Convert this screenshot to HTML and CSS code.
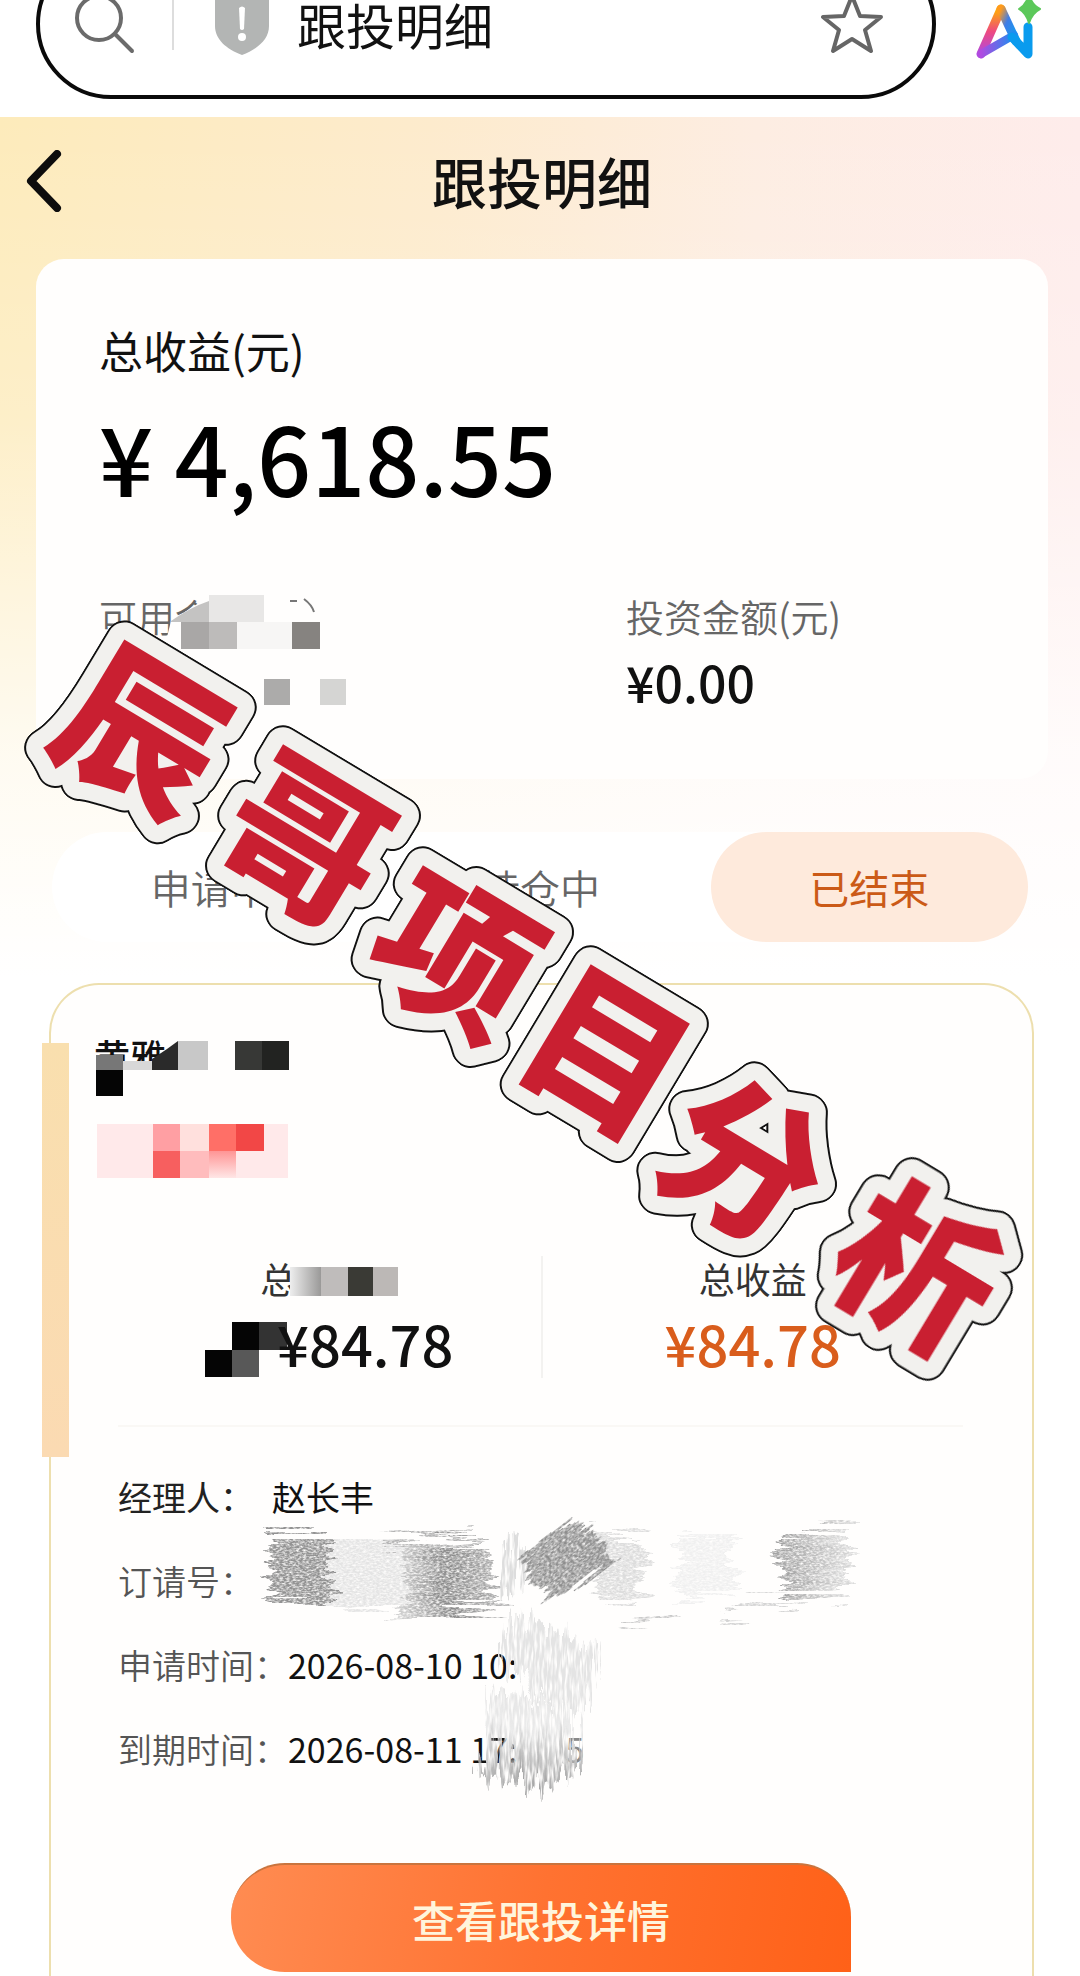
FILE: index.html
```html
<!DOCTYPE html>
<html lang="zh-CN">
<head>
    <meta charset="UTF-8">
    <meta name="viewport" content="width=device-width, initial-scale=1.0">
    <title>跟投明细</title>
    <link rel="stylesheet" href="styles.css">
</head>
<body>
    <div class="browser-bar">
        <div class="search-box">
            <svg class="icon-search" width="64" height="64" viewBox="0 0 64 64" fill="none" stroke="#6b6b6b" stroke-width="4" stroke-linecap="round">
                <circle cx="27" cy="26" r="22"/>
                <path d="M43 42 L60 59"/>
            </svg>
            <span class="bar-line"></span>
            <svg class="icon-shield" width="56" height="64" viewBox="0 0 56 64">
                <path d="M28 0 C36 6 46 7 55 8 V34 C55 47 44 57 28 63 C12 57 1 47 1 34 V8 C10 7 20 6 28 0 Z" fill="#b3b5b4"/>
                <path d="M25 16 Q28 13 31 16 L30 37 Q28 39 26 37 Z" fill="#fff"/>
                <circle cx="28" cy="45" r="4" fill="#fff"/>
            </svg>
            <span class="search-text">跟投明细</span>
            <svg class="icon-star" width="64" height="64" viewBox="0 0 64 64" fill="none" stroke="#666" stroke-width="4" stroke-linejoin="round">
                <path d="M32 4 L40 24 L61 25 L45 38 L51 59 L32 47 L13 59 L19 38 L3 25 L24 24 Z"/>
            </svg>
        </div>
        <svg class="icon-ai" width="72" height="72" viewBox="0 0 72 72" fill="none" stroke-linecap="round" stroke-linejoin="round">
            <defs>
                <linearGradient id="aiLeft" x1="0" y1="1" x2="0" y2="0">
                    <stop offset="0" stop-color="#b04ae0"/>
                    <stop offset=".5" stop-color="#ee4a80"/>
                    <stop offset="1" stop-color="#ffb000"/>
                </linearGradient>
                <linearGradient id="aiRight" x1="0" y1="0" x2="1" y2="1">
                    <stop offset="0" stop-color="#ff9a1c"/>
                    <stop offset=".4" stop-color="#3f7de8"/>
                    <stop offset="1" stop-color="#0aa0f0"/>
                </linearGradient>
                <linearGradient id="aiCross" x1="0" y1="0" x2="1" y2="0">
                    <stop offset="0" stop-color="#b04ae0"/>
                    <stop offset="1" stop-color="#1d8df0"/>
                </linearGradient>
            </defs>
            <path d="M9 61 L29 16" stroke="url(#aiLeft)" stroke-width="9"/>
            <path d="M29 16 L44 48" stroke="url(#aiRight)" stroke-width="9"/>
            <path d="M9 61 L42 42" stroke="url(#aiCross)" stroke-width="8"/>
            <path d="M40 44 L56 61 V34" stroke="#0a9bee" stroke-width="9"/>
            <path d="M57 2 Q60 12 68 16 Q60 20 57 30 Q54 20 47 16 Q54 12 57 2 Z" fill="#5cc85a" stroke="#5cc85a" stroke-width="2"/>
        </svg>
    </div>

    <main class="page">
        <header class="page-header">
            <button class="back" aria-label="返回">
                <svg width="36" height="62" viewBox="0 0 36 62" fill="none" stroke="#0d0d0d" stroke-width="8" stroke-linecap="round" stroke-linejoin="round">
                    <path d="M31 4 L5 31 L31 58"/>
                </svg>
            </button>
            <h1>跟投明细</h1>
        </header>

        <section class="summary">
            <p class="summary-title">总收益(元)</p>
            <p class="balance">¥ 4,618.55</p>
            <div class="summary-row">
                <div class="summary-item">
                    <p class="item-label">可用金额(元)</p>
                    <svg class="mosaic mosaic-balance" width="260" height="112" viewBox="0 0 260 112">
                        <path d="M72 28 L112 2 L260 0 V112 H0 V60 H64 Z" fill="#fffefd"/>
                        <path d="M72 28 Q92 14 110 8 V29 H72 Z" fill="#c4c3c2"/>
                        <rect x="110" y="2" width="55" height="28" fill="#e8e7e6"/>
                        <rect x="82" y="29" width="28" height="27" fill="#a9a7a6"/>
                        <rect x="110" y="29" width="28" height="27" fill="#bdbbba"/>
                        <rect x="138" y="29" width="55" height="27" fill="#f7f6f5"/>
                        <rect x="193" y="29" width="28" height="27" fill="#868380"/>
                        <rect x="165" y="86" width="26" height="26" fill="#acabaa"/>
                        <rect x="221" y="86" width="26" height="26" fill="#d5d5d3"/>
                        <path d="M191 8 H198 M205 6 Q213 12 215 19" fill="none" stroke="#777" stroke-width="2"/>
                    </svg>
                </div>
                <div class="summary-item">
                    <p class="item-label">投资金额(元)</p>
                    <p class="item-value">¥0.00</p>
                </div>
            </div>
        </section>

        <nav class="tabs">
            <button class="tab">申请中</button>
            <button class="tab">持仓中</button>
            <button class="tab active">已结束</button>
        </nav>

        <section class="order">
            <h2 class="order-name">黄雅
                <svg class="mosaic mosaic-name" width="200" height="60" viewBox="0 0 200 60">
                    <rect x="0" y="16" width="32" height="30" fill="#fffefd"/>
                    <rect x="32" y="20" width="50" height="26" fill="#fffefd"/>
                    <rect x="5" y="14" width="27" height="15" fill="#777"/>
                    <rect x="32" y="20" width="29" height="9" fill="#d8d8d8"/>
                    <path d="M61 18 L76 8 L87 0 V29 H61 Z" fill="#2a2a2a"/>
                    <rect x="5" y="29" width="27" height="26" fill="#050505"/>
                    <rect x="87" y="0" width="30" height="29" fill="#c8c8c8"/>
                    <rect x="144" y="0" width="27" height="29" fill="#373836"/>
                    <rect x="171" y="0" width="27" height="29" fill="#222321"/>
                </svg>
            </h2>
            <svg class="order-tag" width="191" height="54" viewBox="0 0 191 54">
                <defs>
                    <linearGradient id="tagFade" x1="0" y1="0" x2="0" y2="1">
                        <stop offset="0" stop-color="#ff9595"/>
                        <stop offset="1" stop-color="#ffe6e6"/>
                    </linearGradient>
                </defs>
                <rect width="191" height="54" fill="#ffe9ea"/>
                <rect x="56" width="27" height="27" fill="#ff9fa3"/>
                <rect x="83" width="29" height="27" fill="#ffe0dd"/>
                <rect x="112" width="27" height="27" fill="#ff6f67"/>
                <rect x="139" width="28" height="27" fill="#f24746"/>
                <rect x="56" y="27" width="27" height="27" fill="#f75f5f"/>
                <rect x="83" y="27" width="29" height="27" fill="#ffbcbd"/>
                <rect x="112" y="27" width="27" height="27" fill="url(#tagFade)"/>
            </svg>

            <div class="stats">
                <div class="stat">
                    <p class="stat-label">总<svg class="stat-mosaic" width="108" height="29" viewBox="0 0 108 29">
                            <defs>
                                <linearGradient id="labelFade">
                                    <stop offset="0" stop-color="#eee"/>
                                    <stop offset="1" stop-color="#9a9998"/>
                                </linearGradient>
                            </defs>
                            <rect width="31" height="29" fill="url(#labelFade)"/>
                            <rect x="31" width="27" height="29" fill="#bfbcbb"/>
                            <rect x="58" width="25" height="29" fill="#3a3a35"/>
                            <rect x="83" width="25" height="29" fill="#bcb8b6"/>
                        </svg>
                    </p>
                    <p class="stat-value"><svg class="value-mosaic" width="82" height="55" viewBox="0 0 82 55">
                            <rect x="27" width="27" height="28" fill="#050505"/>
                            <rect x="54" width="28" height="28" fill="#333"/>
                            <rect y="28" width="27" height="27" fill="#050505"/>
                            <rect x="27" y="28" width="27" height="27" fill="#585858"/>
                        </svg>¥84.78</p>
                </div>
                <div class="stat">
                    <p class="stat-label">总收益</p>
                    <p class="stat-value profit">¥84.78</p>
                </div>
            </div>

            <dl class="details">
                <div class="detail manager"><dt>经理人：</dt><dd>赵长丰</dd></div>
                <div class="detail"><dt>订请号：</dt><dd></dd></div>
                <div class="detail"><dt>申请时间：</dt><dd>2026-08-10 10:</dd></div>
                <div class="detail"><dt>到期时间：</dt><dd>2026-08-11 17:<span class="rest">5</span></dd></div>
                <svg class="scribble" width="600" height="290" viewBox="260 1515 600 290">
                    <defs>
                        <filter id="pencilH" x="-10%" y="-10%" width="120%" height="120%">
                            <feTurbulence type="fractalNoise" baseFrequency="0.01 0.2" numOctaves="2" seed="4" result="streak"/>
                            <feDisplacementMap in="SourceGraphic" in2="streak" scale="44" xChannelSelector="R" yChannelSelector="A" result="shape"/>
                            <feTurbulence type="fractalNoise" baseFrequency="0.3 0.6" numOctaves="2" seed="9"/>
                            <feColorMatrix values="0 0 0 0 0  0 0 0 0 0  0 0 0 0 0  2 0 0 0 -0.3" result="grain"/>
                            <feComposite in="shape" in2="grain" operator="in"/>
                        </filter>
                        <filter id="pencilV" x="-10%" y="-10%" width="120%" height="120%">
                            <feTurbulence type="fractalNoise" baseFrequency="0.2 0.01" numOctaves="2" seed="7" result="streak"/>
                            <feDisplacementMap in="SourceGraphic" in2="streak" scale="50" xChannelSelector="A" yChannelSelector="R" result="shape"/>
                            <feTurbulence type="fractalNoise" baseFrequency="0.4 0.06" numOctaves="2" seed="2"/>
                            <feColorMatrix values="0 0 0 0 0  0 0 0 0 0  0 0 0 0 0  3 0 0 0 -0.8" result="grain"/>
                            <feComposite in="shape" in2="grain" operator="in"/>
                        </filter>
                        <linearGradient id="strokeDown" x1="0" y1="0" x2="0" y2="1">
                            <stop offset="0" stop-color="#e4e4e4"/>
                            <stop offset=".4" stop-color="#ebebeb"/>
                            <stop offset="1" stop-color="#a4a4a4"/>
                        </linearGradient>
                        <linearGradient id="strokeSide">
                            <stop offset="0" stop-color="#a0a0a0"/>
                            <stop offset="1" stop-color="#ddd"/>
                        </linearGradient>
                        <linearGradient id="strokeMid">
                            <stop offset="0" stop-color="#d8d8d8"/>
                            <stop offset=".4" stop-color="#8a8a8a"/>
                            <stop offset="1" stop-color="#c0c0c0"/>
                        </linearGradient>
                    </defs>
                    <g filter="url(#pencilH)">
                        <path d="M268 1536 H332 V1601 L270 1604 Z" fill="#929292"/>
                        <path d="M332 1543 L410 1538 V1607 L350 1612 L332 1599 Z" fill="#e4e4e4"/>
                        <path d="M384 1541 L476 1532 V1538 L386 1548 Z" fill="#b4b4b4"/>
                        <path d="M402 1544 L490 1542 L492 1601 L516 1605 L394 1620 L408 1595 Z" fill="url(#strokeMid)"/>
                        <path d="M586 1533 H640 L645 1598 L600 1602 Z" fill="#dcdcdc"/>
                        <path d="M680 1534 H730 V1597 H680 Z" fill="#f0f0f0"/>
                        <path d="M778 1534 L848 1530 V1596 L782 1601 Z" fill="url(#strokeSide)"/>
                        <path d="M610 1620 L680 1611 L676 1616 L625 1623 Z" fill="#c8c8c8"/>
                        <path d="M725 1618 L745 1605 L796 1607 V1611 Z" fill="#d4d4d4"/>
                    </g>
                    <path d="M503 1537 L530 1540 L518 1595 L498 1594 Z" fill="#ddd" filter="url(#pencilV)"/>
                    <g filter="url(#pencilV)">
                        <path d="M514 1615 L545 1627 L602 1647 L587 1715 L530 1695 L508 1650 Z" fill="#e4e4e4"/>
                        <path d="M494 1685 L535 1700 L574 1707 L578 1773 L540 1790 L474 1775 Z" fill="url(#strokeDown)"/>
                    </g>
                    <g transform="rotate(-38 565 1568)" filter="url(#pencilH)">
                        <path d="M530 1536 H604 L610 1592 H540 Z" fill="#8c8c8c"/>
                    </g>
                </svg>
            </dl>

            <button class="view-btn">查看跟投详情</button>
        </section>
    </main>

    <svg class="stamp" width="1080" height="820" viewBox="0 590 1080 820">
        <g class="stamp-text">
            <text transform="translate(142 732) rotate(31)" y="60">辰</text>
            <text transform="translate(306 840) rotate(31)" y="60">哥</text>
            <text transform="translate(456 954) rotate(31)" y="60">项</text>
            <text transform="translate(606 1052) rotate(31)" y="60">目</text>
            <text transform="translate(744 1160) rotate(31)" y="60">分</text>
            <text transform="translate(918 1268) rotate(31)" y="60">析</text>
        </g>
    </svg>
</body>
</html>
```

FILE: styles.css
```css
* {
    box-sizing: border-box;
}
body {
    position: relative;
    margin: 0;
    background: #fff;
    color: #111;
    font-family: "Noto Sans CJK SC", sans-serif;
    overflow-x: hidden;
}
h1, h2, p, dl, dd {
    margin: 0;
}
button {
    border: none;
    padding: 0;
    background: none;
    font-family: inherit;
    cursor: pointer;
}
svg {
    flex: none;
}

/* browser bar */
.browser-bar {
    height: 117px;
    padding: 0 36px 18px;
    display: flex;
    align-items: flex-end;
    gap: 36px;
    overflow: hidden;
}
.search-box {
    flex: 1;
    height: 150px;
    flex-shrink: 0;
    padding: 0 48px 0 32px;
    border: 4px solid #0a0a0a;
    border-radius: 75px;
    display: flex;
    align-items: center;
}
.bar-line {
    width: 2px;
    height: 52px;
    margin: 0 40px 0 36px;
    background: #ddd;
}
.search-text {
    flex: 1;
    margin-left: 27px;
    font-size: 49px;
    line-height: 48px;
}
.icon-ai {
    margin-bottom: 34px;
}

/* page */
.page {
    padding: 0 32px 0 36px;
    background:
        linear-gradient(to bottom, rgba(255, 255, 255, 0) 0, rgba(255, 255, 255, 0.2) 300px, rgba(255, 255, 255, 0.8) 640px, #fff 860px),
        linear-gradient(to right, #fdebbb 0, #fdebcd 40%, #fdede2 70%, #feeceb 100%);
}
.page-header {
    position: relative;
    height: 142px;
    padding-top: 25px;
    text-align: center;
}
.page-header h1 {
    font-size: 55px;
    font-weight: 500;
    line-height: 76px;
}
.back {
    position: absolute;
    left: -10px;
    top: 33px;
    height: 62px;
}

.summary {
    padding: 61px 63px 68px;
    border-radius: 28px;
    background: #fffefd;
}
.summary-title {
    font-size: 44px;
    line-height: 60px;
}
.balance {
    margin-top: 16px;
    font-size: 95px;
    font-weight: 500;
    line-height: 120px;
    color: #000;
}
.summary-row {
    display: grid;
    grid-template-columns: 527px 1fr;
    margin-top: 76px;
}
.summary-item {
    position: relative;
}
.item-label {
    font-size: 38px;
    font-weight: 350;
    line-height: 48px;
    color: #666;
}
.item-value {
    margin-top: 11px;
    font-size: 50px;
    font-weight: 500;
    line-height: 60px;
}
.mosaic {
    position: absolute;
}
.mosaic-balance {
    left: 0;
    top: 1px;
}

/* tabs */
.tabs {
    display: grid;
    grid-template-columns: 1fr 1fr 1fr;
    gap: 12px;
    margin: 53px 20px 0 16px;
    border-radius: 55px;
    background: #fff;
}
.tab {
    height: 110px;
    border-radius: 55px;
    font-size: 40px;
    font-weight: 350;
    color: #666;
}
.tab.active {
    background: #feeadc;
    font-weight: 400;
    color: #cb5a17;
}

/* order card */
.order {
    position: relative;
    margin: 41px 14px 0 13px;
    padding: 46px 43px 4px;
    border: 2px solid #eddfae;
    border-bottom: none;
    border-radius: 50px 50px 0 0;
    background: #fffefd;
}
.order::before {
    content: "";
    position: absolute;
    left: -9px;
    top: 58px;
    width: 27px;
    height: 414px;
    background: linear-gradient(#f9dfae, #fbdab2);
}
.order-name {
    position: relative;
    font-size: 36px;
    font-weight: 500;
    line-height: 48px;
}
.mosaic-name {
    left: -3px;
    top: 10px;
}
.order-tag {
    display: block;
    margin: 45px 0 0 3px;
}
.stats {
    display: grid;
    grid-template-columns: 1fr 1fr;
    margin: 78px 26px 0 24px;
    padding-bottom: 47px;
    border-bottom: 2px solid #faf8f5;
    text-align: center;
}
.stat + .stat {
    border-left: 2px solid #f3f2f0;
}
.stat-label {
    font-size: 36px;
    font-weight: 400;
    line-height: 44px;
    color: #333;
}
.stat-mosaic {
    margin-left: -6px;
    vertical-align: -2px;
}
.stat-value {
    margin-top: 8px;
    font-size: 56px;
    font-weight: 500;
    line-height: 70px;
}
.value-mosaic {
    margin-right: -10px;
    vertical-align: -10px;
}
.profit {
    color: #d95d1c;
}

/* details */
.details {
    position: relative;
    display: grid;
    gap: 36px;
    margin: 46px 24px 0;
}
.detail {
    display: flex;
    height: 48px;
    font-size: 34px;
    line-height: 48px;
}
.detail dt {
    font-weight: 350;
    color: #555;
}
.manager dt {
    font-weight: 400;
    color: #222;
}
.manager dd {
    margin-left: 18px;
}
.rest {
    margin-left: 48px;
    color: #888;
}
.scribble {
    position: absolute;
    left: 142px;
    top: 42px;
}

.view-btn {
    display: block;
    width: 620px;
    height: 109px;
    margin: 90px auto 0 137px;
    border-top: 2px solid #c9743e;
    border-radius: 54px 54px 0 54px;
    background: linear-gradient(100deg, #ff8c52, #ff7231 50%, #ff6118);
    font-size: 43px;
    font-weight: 500;
    color: #fff5dc;
}

/* sticker text laid over the page */
.stamp {
    position: absolute;
    left: 0;
    top: 590px;
    pointer-events: none;
}
.stamp-text {
    filter: drop-shadow(1px 1px 0 #111) drop-shadow(-1px -1px 0 #111) drop-shadow(1px -1px 0 #111) drop-shadow(-1px 1px 0 #111);
}
.stamp-text text {
    font-size: 158px;
    font-weight: 900;
    text-anchor: middle;
    fill: #c91f31;
    stroke: #f2f1ee;
    stroke-width: 34px;
    stroke-linejoin: round;
    paint-order: stroke;
}
```
